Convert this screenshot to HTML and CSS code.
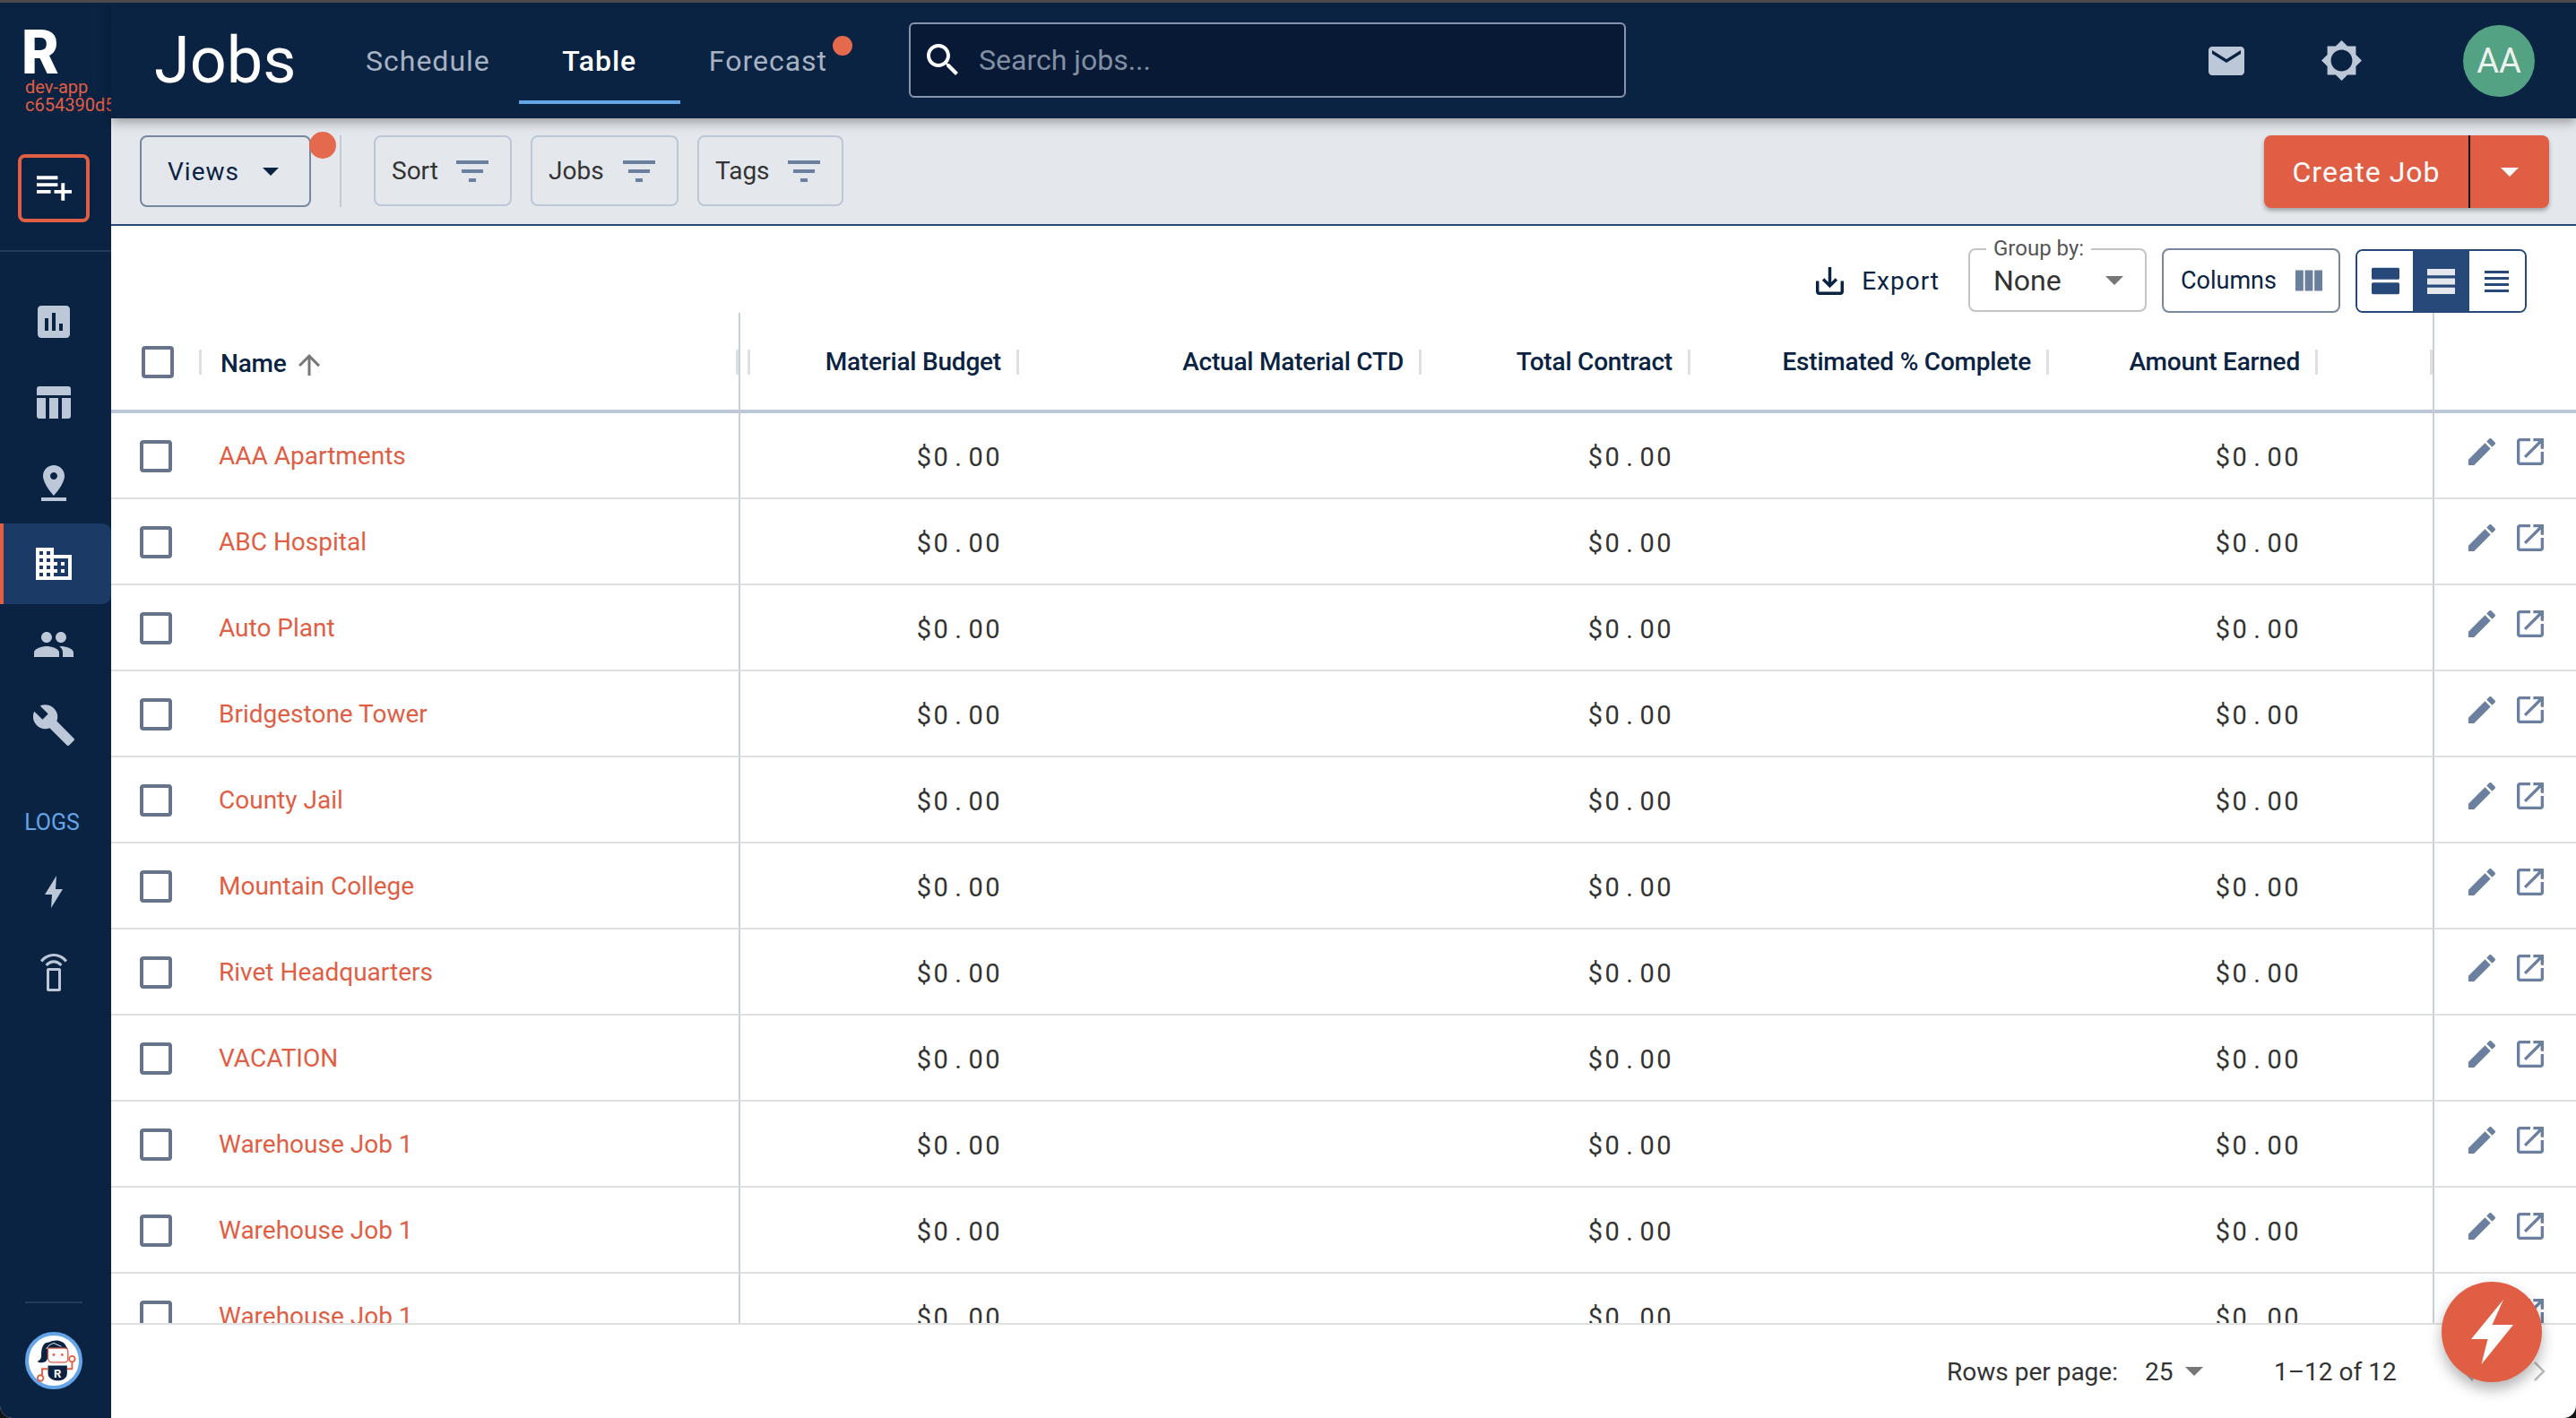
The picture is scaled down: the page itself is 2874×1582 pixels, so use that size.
FILE: index.html
```html
<!DOCTYPE html>
<html>
<head>
    <title>Jobs</title>
    <link rel="stylesheet" href="styles.css">
</head>
<body>
    <svg class="sprite" xmlns="http://www.w3.org/2000/svg">
        <symbol id="i-drop" viewBox="7 10 10 5"><path d="M7 10l5 5 5-5z"/></symbol>
        <symbol id="i-filter" viewBox="3 6 18 12"><path d="M10 18h4v-2h-4v2zM3 6v2h18V6H3zm3 7h12v-2H6v2z"/></symbol>
        <symbol id="i-edit" viewBox="0 0 24 24"><path d="M3 17.25V21h3.75L17.81 9.94l-3.75-3.75L3 17.25zM20.71 7.04c.39-.39.39-1.02 0-1.41l-2.34-2.34c-.39-.39-1.02-.39-1.41 0l-1.83 1.83 3.75 3.75 1.83-1.83z"/></symbol>
        <symbol id="i-open" viewBox="0 0 24 24"><path d="M19 19H5V5h7V3H5c-1.11 0-2 .9-2 2v14c0 1.1.89 2 2 2h14c1.1 0 2-.9 2-2v-7h-2v7zM14 3v2h3.59l-9.83 9.83 1.41 1.41L19 6.41V10h2V3h-7z"/></symbol>
    </svg>

    <div class="window-edge"></div>
    <div class="app">
        <aside class="sidebar">
            <div class="brand">
                <span class="brand-mark">R</span>
                <span class="brand-env">dev-app</span>
                <span class="brand-env">c654390d5</span>
            </div>
            <div class="quick-add">
                <button class="quick-add-btn">
                    <svg viewBox="2 6 20 14"><path d="M14 10H2v2h12v-2zm0-4H2v2h12V6zm4 8v-4h-2v4h-4v2h4v4h2v-4h4v-2h-4zM2 16h8v-2H2v2z"/></svg>
                </button>
            </div>
            <nav class="side-nav">
                <a class="side-link"><svg class="side-icon" viewBox="3 3 18 18"><path d="M19 3H5c-1.1 0-2 .9-2 2v14c0 1.1.9 2 2 2h14c1.1 0 2-.9 2-2V5c0-1.1-.9-2-2-2zM9 17H7v-7h2v7zm4 0h-2V7h2v10zm4 0h-2v-4h2v4z"/></svg></a>
                <a class="side-link"><svg class="side-icon icon-table" viewBox="0 0 38 36"><path d="M3 0h32a3 3 0 0 1 3 3v7H0V3a3 3 0 0 1 3-3zM0 13h10v23H3a3 3 0 0 1-3-3zM14 13h10v23H14zM28 13h10v20a3 3 0 0 1-3 3h-7z"/></svg></a>
                <a class="side-link"><svg class="side-icon icon-pin" viewBox="5 2 14 20"><path d="M18 8c0-3.31-2.69-6-6-6S6 4.69 6 8c0 4.5 6 11 6 11s6-6.5 6-11zm-8 0c0-1.1.9-2 2-2s2 .9 2 2-.89 2-2 2c-1.1 0-2-.9-2-2zM5 20v2h14v-2H5z"/></svg></a>
                <a class="side-link active"><svg class="side-icon icon-domain" viewBox="2 3 20 18"><path d="M12 7V3H2v18h20V7H12zM6 19H4v-2h2v2zm0-4H4v-2h2v2zm0-4H4V9h2v2zm0-4H4V5h2v2zm4 12H8v-2h2v2zm0-4H8v-2h2v2zm0-4H8V9h2v2zm0-4H8V5h2v2zm10 12h-8v-2h2v-2h-2v-2h2v-2h-2V9h8v10zm-2-8h-2v2h2v-2zm0 4h-2v2h2v-2z"/></svg></a>
                <a class="side-link"><svg class="side-icon icon-people" viewBox="1 5 22 14"><path d="M16 11c1.66 0 2.99-1.34 2.99-3S17.66 5 16 5c-1.66 0-3 1.34-3 3s1.34 3 3 3zm-8 0c1.66 0 2.99-1.34 2.99-3S9.66 5 8 5C6.34 5 5 6.34 5 8s1.34 3 3 3zm0 2c-2.33 0-7 1.17-7 3.5V19h14v-2.5c0-2.33-4.67-3.5-7-3.5zm8 0c-.29 0-.62.02-.97.05 1.16.84 1.97 1.97 1.97 3.45V19h6v-2.5c0-2.33-4.67-3.5-7-3.5z"/></svg></a>
                <a class="side-link"><svg class="side-icon icon-wrench" viewBox="1 1 22 22"><path d="M22.7 19l-9.1-9.1c.9-2.3.4-5-1.5-6.9-2-2-5-2.4-7.4-1.3L9 6 6 9 1.6 4.7C.4 7.1.9 10.1 2.9 12.1c1.9 1.9 4.6 2.4 6.9 1.5l9.1 9.1c.4.4 1 .4 1.4 0l2.3-2.3c.5-.4.5-1.1.1-1.4z"/></svg></a>
                <div class="side-label">LOGS</div>
                <a class="side-link"><svg class="side-icon icon-bolt" viewBox="0 0 20 36"><path d="M13 0L0 21h8L7 36 20 15h-8z"/></svg></a>
                <a class="side-link"><svg class="side-icon icon-remote" viewBox="0 0 30 42"><path d="M0 7.5C3.5 2.8 9 0 15 0s11.5 2.8 15 7.5l-2.5 2C24.5 5.6 20 3 15 3S5.5 5.6 2.5 9.5zM5.5 12C7.8 9 11.2 7.2 15 7.2S22.2 9 24.5 12L22 14c-1.7-2.2-4.2-3.6-7-3.6S9.7 11.8 8 14z"/><path d="M9 16h12a2 2 0 0 1 2 2v22a2 2 0 0 1-2 2H9a2 2 0 0 1-2-2V18a2 2 0 0 1 2-2zm1 3v20h10V19z"/></svg></a>
            </nav>
            <div class="side-bottom">
                <div class="bot-avatar">
                    <svg viewBox="0 0 56 56">
                        <path d="M22 6c7-4 18-3 21 5l2 3-21 0c-2 2-3 4-3 7 0 4-1 8-5 9-3 1-6 0-8-1 3-1 5-3 5-7 0-3 0-6 1-9 1-4 4-7 8-7z" class="bot-dark"/>
                        <path d="M21 13h20a4 4 0 0 1 4 4v9a4 4 0 0 1-4 4H26a5 5 0 0 1-5-5z" class="bot-face"/>
                        <path d="M19 14c2-4 5-6 9-7l9 4" class="bot-line"/>
                        <circle cx="28" cy="21" r="1.5" class="bot-eye"/>
                        <circle cx="38" cy="21" r="1.5" class="bot-eye"/>
                        <path d="M21 34h23v9c0 6-5 9-11 9s-12-3-12-9z" class="bot-dark"/>
                        <text x="32.5" y="48" class="bot-r">R</text>
                        <path d="M21 38h-7v9M44 38h6v-9" class="bot-wire"/>
                        <circle cx="12" cy="49" r="3.5" class="bot-node"/>
                        <circle cx="50" cy="26" r="3.5" class="bot-node"/>
                    </svg>
                </div>
            </div>
        </aside>

        <main class="main">
            <header class="topbar">
                <h1 class="page-title">Jobs</h1>
                <nav class="tabs">
                    <a class="tab">Schedule</a>
                    <a class="tab tab-active">Table</a>
                    <a class="tab tab-dot">Forecast</a>
                </nav>
                <div class="search">
                    <svg viewBox="3 3 18 18"><path d="M15.5 14h-.79l-.28-.27C15.41 12.59 16 11.11 16 9.5 16 5.91 13.09 3 9.5 3S3 5.91 3 9.5 5.91 16 9.5 16c1.61 0 3.09-.59 4.23-1.57l.27.28v.79l5 4.99L20.49 19l-4.99-5zm-6 0C7.01 14 5 11.99 5 9.5S7.01 5 9.5 5 14 7.01 14 9.5 11.99 14 9.5 14z"/></svg>
                    <span>Search jobs...</span>
                </div>
                <div class="top-actions">
                    <svg class="icon-mail" viewBox="2 4 20 16"><path d="M20 4H4c-1.1 0-2 .9-2 2v12c0 1.1.9 2 2 2h16c1.1 0 2-.9 2-2V6c0-1.1-.9-2-2-2zm0 4l-8 5-8-5V6l8 5 8-5v2z"/></svg>
                    <svg class="icon-theme" viewBox="0.69 0.69 22.62 22.62"><path d="M20 15.31L23.31 12 20 8.69V4h-4.69L12 .69 8.69 4H4v4.69L.69 12 4 15.31V20h4.69L12 23.31 15.31 20H20v-4.69zM12 18c-3.31 0-6-2.69-6-6s2.69-6 6-6 6 2.69 6 6-2.69 6-6 6z"/></svg>
                    <div class="avatar">AA</div>
                </div>
            </header>

            <div class="toolbar">
                <button class="views-btn">Views<svg class="drop"><use href="#i-drop"/></svg></button>
                <div class="toolbar-sep"></div>
                <button class="filter-btn btn-sort">Sort<svg><use href="#i-filter"/></svg></button>
                <button class="filter-btn btn-jobs">Jobs<svg><use href="#i-filter"/></svg></button>
                <button class="filter-btn btn-tags">Tags<svg><use href="#i-filter"/></svg></button>
                <div class="create-job">
                    <button class="create-main">Create Job</button>
                    <button class="create-more"><svg><use href="#i-drop"/></svg></button>
                </div>
            </div>

            <div class="table-tools">
                <button class="export-btn">
                    <svg viewBox="3 3 18 18"><path d="M19 12v7H5v-7H3v7c0 1.1.9 2 2 2h14c1.1 0 2-.9 2-2v-7h-2zm-6 .67l2.59-2.58L17 11.5l-5 5-5-5 1.41-1.41L11 12.67V3h2z"/></svg>
                    Export
                </button>
                <div class="group-by">
                    <span class="group-label">Group by:</span>
                    <span class="group-value">None</span>
                    <svg><use href="#i-drop"/></svg>
                </div>
                <button class="columns-btn">
                    Columns
                    <svg viewBox="4 5 17 13"><path d="M10 18h5V5h-5v13zm-6 0h5V5H4v13zM16 5v13h5V5h-5z"/></svg>
                </button>
                <div class="density">
                    <button class="density-btn">
                        <svg class="density-agenda" viewBox="2 3 19 18"><path d="M20 13H3c-.55 0-1 .45-1 1v6c0 .55.45 1 1 1h17c.55 0 1-.45 1-1v-6c0-.55-.45-1-1-1zm0-10H3c-.55 0-1 .45-1 1v6c0 .55.45 1 1 1h17c.55 0 1-.45 1-1V4c0-.55-.45-1-1-1z"/></svg>
                    </button>
                    <button class="density-btn density-on">
                        <svg class="density-list" viewBox="0 0 30 27"><path d="M0 0h30v7H0zM0 10h30v7H0zM0 20h30v7H0z"/></svg>
                    </button>
                    <button class="density-btn">
                        <svg class="density-lines" viewBox="0 0 27 24"><path d="M0 0h27v3H0zM0 7h27v3H0zM0 14h27v3H0zM0 21h27v3H0z"/></svg>
                    </button>
                </div>
            </div>

            <div class="table-wrap">
                <table class="jobs-table">
                    <colgroup>
                        <col class="col-check">
                        <col class="col-name">
                        <col class="col-budget">
                        <col class="col-actual">
                        <col class="col-contract">
                        <col class="col-percent">
                        <col class="col-earned">
                        <col class="col-spacer">
                        <col class="col-actions">
                    </colgroup>
                    <thead>
                        <tr>
                            <th class="cell-check head-check"><span class="checkbox"></span></th>
                            <th class="cell-name">Name<svg class="sort-arrow" viewBox="4 4 16 16"><path d="M4 12l1.41 1.41L11 7.83V20h2V7.83l5.58 5.59L20 12l-8-8-8 8z"/></svg></th>
                            <th class="head-budget">Material Budget</th>
                            <th>Actual Material CTD</th>
                            <th>Total Contract</th>
                            <th>Estimated % Complete</th>
                            <th>Amount Earned</th>
                            <th></th>
                            <th class="cell-actions"></th>
                        </tr>
                    </thead>
                    <tbody>
                        <tr><td class="cell-check"><span class="checkbox"></span></td><td class="cell-name"><a>AAA Apartments</a></td><td class="money">$0<span class="pt">.</span>00</td><td></td><td class="money">$0<span class="pt">.</span>00</td><td></td><td class="money">$0<span class="pt">.</span>00</td><td></td><td class="cell-actions"><svg><use href="#i-edit"/></svg><svg><use href="#i-open"/></svg></td></tr>
                        <tr><td class="cell-check"><span class="checkbox"></span></td><td class="cell-name"><a>ABC Hospital</a></td><td class="money">$0<span class="pt">.</span>00</td><td></td><td class="money">$0<span class="pt">.</span>00</td><td></td><td class="money">$0<span class="pt">.</span>00</td><td></td><td class="cell-actions"><svg><use href="#i-edit"/></svg><svg><use href="#i-open"/></svg></td></tr>
                        <tr><td class="cell-check"><span class="checkbox"></span></td><td class="cell-name"><a>Auto Plant</a></td><td class="money">$0<span class="pt">.</span>00</td><td></td><td class="money">$0<span class="pt">.</span>00</td><td></td><td class="money">$0<span class="pt">.</span>00</td><td></td><td class="cell-actions"><svg><use href="#i-edit"/></svg><svg><use href="#i-open"/></svg></td></tr>
                        <tr><td class="cell-check"><span class="checkbox"></span></td><td class="cell-name"><a>Bridgestone Tower</a></td><td class="money">$0<span class="pt">.</span>00</td><td></td><td class="money">$0<span class="pt">.</span>00</td><td></td><td class="money">$0<span class="pt">.</span>00</td><td></td><td class="cell-actions"><svg><use href="#i-edit"/></svg><svg><use href="#i-open"/></svg></td></tr>
                        <tr><td class="cell-check"><span class="checkbox"></span></td><td class="cell-name"><a>County Jail</a></td><td class="money">$0<span class="pt">.</span>00</td><td></td><td class="money">$0<span class="pt">.</span>00</td><td></td><td class="money">$0<span class="pt">.</span>00</td><td></td><td class="cell-actions"><svg><use href="#i-edit"/></svg><svg><use href="#i-open"/></svg></td></tr>
                        <tr><td class="cell-check"><span class="checkbox"></span></td><td class="cell-name"><a>Mountain College</a></td><td class="money">$0<span class="pt">.</span>00</td><td></td><td class="money">$0<span class="pt">.</span>00</td><td></td><td class="money">$0<span class="pt">.</span>00</td><td></td><td class="cell-actions"><svg><use href="#i-edit"/></svg><svg><use href="#i-open"/></svg></td></tr>
                        <tr><td class="cell-check"><span class="checkbox"></span></td><td class="cell-name"><a>Rivet Headquarters</a></td><td class="money">$0<span class="pt">.</span>00</td><td></td><td class="money">$0<span class="pt">.</span>00</td><td></td><td class="money">$0<span class="pt">.</span>00</td><td></td><td class="cell-actions"><svg><use href="#i-edit"/></svg><svg><use href="#i-open"/></svg></td></tr>
                        <tr><td class="cell-check"><span class="checkbox"></span></td><td class="cell-name"><a>VACATION</a></td><td class="money">$0<span class="pt">.</span>00</td><td></td><td class="money">$0<span class="pt">.</span>00</td><td></td><td class="money">$0<span class="pt">.</span>00</td><td></td><td class="cell-actions"><svg><use href="#i-edit"/></svg><svg><use href="#i-open"/></svg></td></tr>
                        <tr><td class="cell-check"><span class="checkbox"></span></td><td class="cell-name"><a>Warehouse Job 1</a></td><td class="money">$0<span class="pt">.</span>00</td><td></td><td class="money">$0<span class="pt">.</span>00</td><td></td><td class="money">$0<span class="pt">.</span>00</td><td></td><td class="cell-actions"><svg><use href="#i-edit"/></svg><svg><use href="#i-open"/></svg></td></tr>
                        <tr><td class="cell-check"><span class="checkbox"></span></td><td class="cell-name"><a>Warehouse Job 1</a></td><td class="money">$0<span class="pt">.</span>00</td><td></td><td class="money">$0<span class="pt">.</span>00</td><td></td><td class="money">$0<span class="pt">.</span>00</td><td></td><td class="cell-actions"><svg><use href="#i-edit"/></svg><svg><use href="#i-open"/></svg></td></tr>
                        <tr><td class="cell-check"><span class="checkbox"></span></td><td class="cell-name"><a>Warehouse Job 1</a></td><td class="money">$0<span class="pt">.</span>00</td><td></td><td class="money">$0<span class="pt">.</span>00</td><td></td><td class="money">$0<span class="pt">.</span>00</td><td></td><td class="cell-actions"><svg><use href="#i-edit"/></svg><svg><use href="#i-open"/></svg></td></tr>
                    </tbody>
                </table>
            </div>

            <footer class="pager">
                <span class="pager-label">Rows per page:</span>
                <span class="pager-size">25<svg><use href="#i-drop"/></svg></span>
                <span class="pager-count">1–12 of 12</span>
                <svg class="pager-chevron" viewBox="0 0 14 24"><path d="M12 2L2 12l10 10"/></svg>
                <svg class="pager-chevron" viewBox="0 0 14 24"><path d="M2 2l10 10L2 22"/></svg>
            </footer>

            <button class="fab">
                <svg viewBox="0 0 47 72"><path d="M36 0L23.5 28H47L11.5 72l7-28H0z"/></svg>
            </button>
        </main>
    </div>
</body>
</html>
```

FILE: styles.css
```css
:root {
    --navy: #0a2342;
    --navy-light: #1b3b66;
    --blue: #27497a;
    --sky: #64a5e8;
    --orange: #e05e44;
    --slate: #bcc7d7;
    --steel: #6b7f9e;
    --rule: #e0e0e0;
}

* {
    box-sizing: border-box;
}

html, body {
    height: 100%;
}

body {
    margin: 0;
    background: #141414;
    font-family: Roboto, sans-serif;
    color: #333;
    overflow: hidden;
    display: flex;
    flex-direction: column;
}

button {
    font-family: inherit;
    cursor: pointer;
}

.sprite {
    display: none;
}

.window-edge {
    height: 3px;
    background: #4b4b4b;
    flex: none;
}

.app {
    flex: 1;
    min-height: 0;
    display: flex;
    border-radius: 0 0 14px 14px;
    overflow: hidden;
    background: white;
}

/* sidebar */

.sidebar {
    width: 124px;
    flex: none;
    background: var(--navy);
    display: flex;
    flex-direction: column;
    overflow: hidden;
}

.brand {
    height: 169px;
    padding: 29px 0 0 24px;
    display: flex;
    flex-direction: column;
    flex: none;
    white-space: nowrap;
}

.brand-mark {
    color: white;
    font-size: 68px;
    font-weight: 900;
    line-height: 55px;
    height: 55px;
    transform: scaleX(0.95);
    transform-origin: left center;
}

.brand-env {
    color: var(--orange);
    font-size: 20px;
    line-height: 20px;
    margin-left: 4px;
}

.quick-add {
    height: 109px;
    flex: none;
    border-bottom: 2px solid #26395a;
}

.quick-add-btn {
    display: flex;
    align-items: center;
    justify-content: center;
    width: 80px;
    height: 76px;
    margin-left: 20px;
    background: none;
    border: 4px solid var(--orange);
    border-radius: 8px;
}

.quick-add-btn svg {
    width: 39px;
    height: 28px;
    fill: white;
}

.side-nav {
    display: flex;
    flex-direction: column;
    padding-top: 33px;
}

.side-link {
    height: 90px;
    display: flex;
    align-items: center;
    justify-content: center;
    flex: none;
    padding-right: 4px;
}

.side-link.active {
    background: var(--navy-light);
    border-left: 4px solid var(--orange);
    border-radius: 0 10px 10px 0;
    padding-right: 8px;
}

.side-icon {
    width: 36px;
    height: 36px;
    fill: var(--slate);
}

.side-link.active .side-icon {
    fill: white;
}

.icon-table {
    width: 38px;
}

.icon-pin {
    width: 28px;
    height: 40px;
}

.icon-domain {
    width: 40px;
}

.icon-people {
    width: 44px;
    height: 28px;
}

.icon-wrench {
    width: 46px;
    height: 46px;
}

.icon-bolt {
    width: 20px;
}

.icon-remote {
    width: 30px;
    height: 42px;
}

.side-label {
    color: var(--sky);
    font-size: 25px;
    line-height: 26px;
    text-align: center;
    padding-right: 8px;
    margin-top: 51px;
    margin-bottom: 19px;
}

.side-bottom {
    margin-top: auto;
    margin-left: 28px;
    margin-right: 32px;
    border-top: 2px solid #26395a;
    padding: 32px 0 32px;
}

.bot-avatar {
    width: 64px;
    height: 64px;
    border-radius: 50%;
    background: white;
    border: 4px solid var(--sky);
    padding: 2px;
}

.bot-avatar svg {
    display: block;
    width: 52px;
    height: 52px;
}

.bot-dark {
    fill: var(--navy);
}

.bot-face {
    fill: white;
    stroke: var(--orange);
    stroke-width: 1.5;
}

.bot-line {
    fill: none;
    stroke: white;
    stroke-width: 1;
}

.bot-eye {
    fill: var(--orange);
}

.bot-wire {
    fill: none;
    stroke: var(--orange);
    stroke-width: 2;
}

.bot-node {
    fill: white;
    stroke: var(--orange);
    stroke-width: 2;
}

.bot-r {
    fill: white;
    font-size: 14px;
    font-weight: 700;
    text-anchor: middle;
}

/* main column */

.main {
    flex: 1;
    min-width: 0;
    display: flex;
    flex-direction: column;
    position: relative;
}

.topbar {
    height: 129px;
    flex: none;
    background: var(--navy);
    display: flex;
    align-items: center;
    padding: 0 46px 0 48px;
    box-shadow: 0 4px 12px rgba(0, 0, 0, 0.35);
    position: relative;
    z-index: 2;
}

.page-title {
    margin: 0 30px 0 0;
    color: white;
    font-size: 72px;
    font-weight: 400;
    width: 174px;
}

.tabs {
    display: flex;
    height: 100%;
}

.tab {
    display: flex;
    align-items: center;
    padding: 0 32px;
    color: #a7b2c3;
    font-size: 32px;
    letter-spacing: 1px;
    position: relative;
}

.tab-active {
    color: white;
    font-weight: 500;
    min-width: 180px;
    justify-content: center;
}

.tab-active::after {
    content: "";
    position: absolute;
    left: 0;
    right: 0;
    bottom: 16px;
    height: 4px;
    background: var(--sky);
}

.tab-dot::after {
    content: "";
    position: absolute;
    top: 37px;
    right: 4px;
    width: 22px;
    height: 22px;
    border-radius: 50%;
    background: #e5694d;
}

.search {
    width: 800px;
    height: 84px;
    margin-left: 59px;
    margin-top: -2px;
    flex: none;
    display: flex;
    align-items: center;
    gap: 22px;
    padding-left: 18px;
    background: #071934;
    border: 2px solid #8595ad;
    border-radius: 6px;
    color: #828fa3;
    font-size: 32px;
}

.search svg {
    width: 36px;
    height: 36px;
    fill: white;
}

.top-actions {
    margin-left: auto;
    display: flex;
    align-items: center;
}

.icon-mail {
    width: 40px;
    height: 32px;
    fill: var(--slate);
    margin-right: 86px;
}

.icon-theme {
    width: 45px;
    height: 45px;
    fill: var(--slate);
    margin-right: 113px;
}

.avatar {
    width: 80px;
    height: 80px;
    border-radius: 50%;
    background: #53a284;
    color: #eef2ef;
    display: flex;
    align-items: center;
    justify-content: center;
    font-size: 38px;
}

/* filter toolbar */

.toolbar {
    height: 120px;
    flex: none;
    background: #e4e7ec;
    border-bottom: 2px solid var(--blue);
    display: flex;
    align-items: flex-start;
    padding: 19px 30px 0 32px;
}

.views-btn {
    width: 191px;
    height: 80px;
    display: flex;
    align-items: center;
    gap: 26px;
    padding: 0 0 0 29px;
    background: none;
    border: 2px solid #76879e;
    border-radius: 8px;
    color: var(--navy);
    font-size: 28px;
    letter-spacing: 1px;
    position: relative;
}

.views-btn::after {
    content: "";
    position: absolute;
    top: -6px;
    right: -30px;
    width: 30px;
    height: 30px;
    border-radius: 50%;
    background: #e5694d;
}

.drop {
    width: 18px;
    height: 9px;
    fill: var(--navy);
}

.toolbar-sep {
    width: 2px;
    height: 80px;
    background: #c3cad6;
    margin: 0 36px 0 32px;
}

.filter-btn {
    height: 79px;
    margin-right: 21px;
    display: flex;
    align-items: center;
    justify-content: space-between;
    padding: 0 24px 0 18px;
    background: none;
    border: 2px solid #bcc7d7;
    border-radius: 8px;
    color: #333;
    font-size: 28px;
}

.btn-sort {
    width: 154px;
}

.btn-jobs {
    width: 165px;
}

.btn-tags {
    width: 163px;
}

.filter-btn svg {
    width: 36px;
    height: 24px;
    fill: var(--steel);
}

.create-job {
    margin-left: auto;
    display: flex;
    height: 81px;
    border-radius: 8px;
    background: var(--orange);
    box-shadow: 0 3px 5px rgba(0, 0, 0, 0.3);
}

.create-job button {
    background: none;
    border: none;
    color: white;
}

.create-main {
    width: 230px;
    font-size: 32px;
    letter-spacing: 1px;
    border-right: 2px solid #0a0f1c !important;
}

.create-more {
    width: 88px;
    display: flex;
    align-items: center;
    justify-content: center;
}

.create-more svg {
    width: 20px;
    height: 10px;
    fill: white;
}

/* table controls */

.table-tools {
    flex: none;
    height: 97px;
    display: flex;
    justify-content: flex-end;
    align-items: flex-end;
    padding-right: 55px;
}

.export-btn {
    height: 72px;
    display: flex;
    align-items: center;
    gap: 20px;
    margin-right: 32px;
    padding: 0;
    border: none;
    background: none;
    color: var(--navy);
    font-size: 28px;
    letter-spacing: 1px;
}

.export-btn svg {
    width: 31px;
    height: 31px;
    fill: var(--navy);
}

.group-by {
    width: 199px;
    height: 71px;
    margin: 0 17px 1px 0;
    border: 2px solid #c4c4c4;
    border-radius: 8px;
    display: flex;
    align-items: center;
    justify-content: space-between;
    padding: 0 24px 0 26px;
    position: relative;
    color: #333;
    font-size: 32px;
}

.group-label {
    position: absolute;
    top: -15px;
    left: 18px;
    padding: 0 8px;
    background: white;
    font-size: 24px;
    line-height: 26px;
    color: #555;
}

.group-by svg {
    width: 20px;
    height: 10px;
    fill: #777;
}

.columns-btn {
    width: 199px;
    height: 72px;
    margin-right: 17px;
    display: flex;
    align-items: center;
    justify-content: space-between;
    padding: 0 18px 0 19px;
    background: none;
    border: 2px solid #76879e;
    border-radius: 8px;
    color: var(--navy);
    font-size: 27px;
}

.columns-btn svg {
    width: 30px;
    height: 24px;
    fill: var(--steel);
}

.density {
    width: 191px;
    height: 71px;
    display: flex;
    border: 2px solid var(--blue);
    border-radius: 8px;
    overflow: hidden;
}

.density-btn {
    flex: 1;
    display: flex;
    align-items: center;
    justify-content: center;
    padding: 0;
    border: none;
    background: white;
}

.density-btn svg {
    fill: var(--blue);
}

.density-on {
    background: var(--blue);
}

.density-on svg {
    fill: #e4e7ec;
}

.density-agenda {
    width: 31px;
    height: 31px;
}

.density-list {
    width: 31px;
    height: 30px;
}

.density-lines {
    width: 27px;
    height: 24px;
}

/* table */

.table-wrap {
    flex: 1;
    min-height: 0;
    overflow: hidden;
    border-bottom: 2px solid var(--rule);
}

.jobs-table {
    width: 2750px;
    table-layout: fixed;
    border-collapse: separate;
    border-spacing: 0;
}

.col-check { width: 102px; }
.col-name { width: 600px; }
.col-budget { width: 311px; }
.col-actual { width: 449px; }
.col-contract { width: 300px; }
.col-percent { width: 400px; }
.col-earned { width: 300px; }
.col-spacer { width: 128px; }
.col-actions { width: 160px; }

th {
    height: 112px;
    padding: 0 20px 0 0;
    border-bottom: 4px solid #bcc8d9;
    color: var(--navy);
    font-size: 28px;
    font-weight: 500;
    letter-spacing: -0.2px;
    text-align: right;
    white-space: nowrap;
    position: relative;
}

th::after {
    content: "";
    position: absolute;
    top: 41px;
    right: 0;
    width: 3px;
    height: 28px;
    background: var(--rule);
}

th.cell-actions::after {
    display: none;
}

th.head-check::after {
    right: 1px;
}

.head-budget::before {
    content: "";
    position: absolute;
    top: 41px;
    left: 8px;
    width: 3px;
    height: 28px;
    background: var(--rule);
}

th.cell-name {
    text-align: left;
    padding-left: 20px;
    padding-top: 4px;
}

.sort-arrow {
    width: 24px;
    height: 24px;
    margin-left: 13px;
    fill: #777;
    vertical-align: -4px;
}

td {
    height: 96px;
    padding: 3px 20px 0 0;
    border-bottom: 2px solid var(--rule);
    text-align: right;
}

.cell-name {
    border-right: 2px solid #c6cfdc;
}

td.cell-name {
    text-align: left;
    padding: 1px 0 0 18px;
    font-size: 28px;
}

td.cell-name a {
    color: var(--orange);
}

.cell-check {
    text-align: left;
    padding: 1px 0 0 32px;
}

.head-check {
    padding: 2px 0 0 34px;
}

.checkbox {
    display: block;
    width: 36px;
    height: 36px;
    border: 4px solid #66738a;
    border-radius: 4px;
}

.money {
    font-size: 29px;
    letter-spacing: 2.5px;
    color: #333;
    padding-right: 19px;
}

.pt {
    margin: 0 5px;
}

.cell-actions {
    border-left: 2px solid #c6cfdc;
    text-align: left;
    padding: 0 0 8px 33px;
    white-space: nowrap;
}

.cell-actions svg {
    width: 40px;
    height: 40px;
    fill: var(--steel);
    margin-right: 14px;
    vertical-align: middle;
}

/* pager */

.pager {
    height: 104px;
    flex: none;
    display: flex;
    align-items: center;
    padding: 0 0 0 2048px;
    color: #333;
    font-size: 28px;
}

.pager > * {
    flex: none;
}

.pager-label {
    width: 221px;
}

.pager-size {
    display: flex;
    align-items: center;
    gap: 14px;
    width: 144px;
}

.pager-size svg {
    width: 20px;
    height: 10px;
    fill: #777;
}

.pager-count {
    width: 210px;
}

.pager-chevron {
    width: 14px;
    height: 24px;
    fill: none;
    stroke: #bbb;
    stroke-width: 2.5;
}

.pager-chevron + .pager-chevron {
    margin-left: 65px;
}

.fab {
    position: absolute;
    left: 2600px;
    top: 1427px;
    width: 112px;
    height: 112px;
    padding: 0;
    border: none;
    border-radius: 50%;
    background: var(--orange);
    box-shadow: 0 8px 16px rgba(0, 0, 0, 0.3);
    display: flex;
    align-items: center;
    justify-content: center;
    z-index: 3;
}

.fab svg {
    width: 47px;
    height: 72px;
    fill: white;
}
```
